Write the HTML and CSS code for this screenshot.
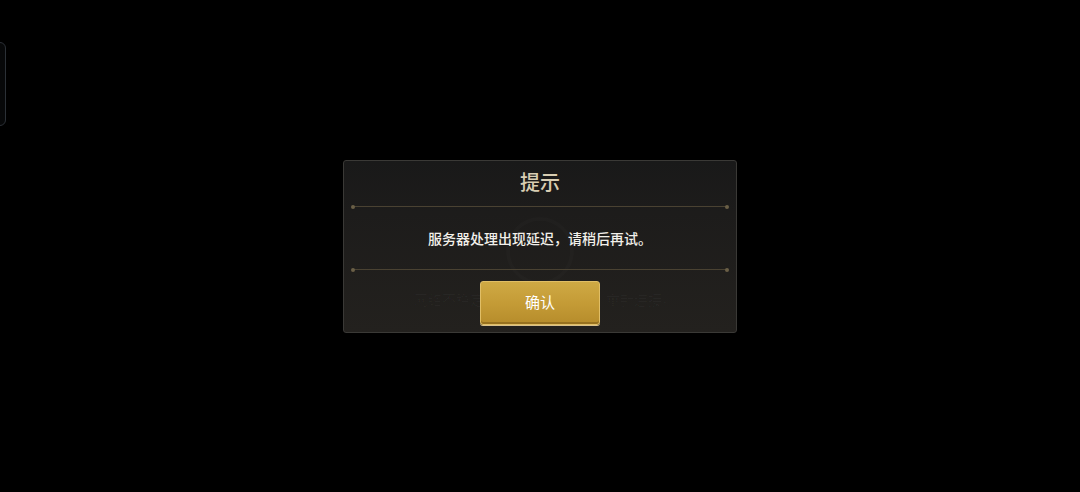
FILE: index.html
```html
<!DOCTYPE html>
<html lang="zh-CN">
<head>
  <meta charset="UTF-8" />
  <title>提示</title>
  <link rel="stylesheet" href="styles.css">
</head>
<body>
  <div class="edge-tab"></div>

  <div class="stage">
    <div class="dialog">
      <!-- faint loading layer behind the dialog content -->
      <div class="ghost">
        <div class="spinner"></div>
        <span class="ghost-text left">网络不稳定</span>
        <span class="ghost-text right">重新连接。</span>
      </div>
      <h2 class="title">提示</h2>
      <div class="divider"></div>
      <p class="message">服务器处理出现延迟，请稍后再试。</p>
      <div class="divider"></div>
      <div class="actions">
        <button class="confirm">确认</button>
      </div>
    </div>
  </div>
</body>
</html>
```

FILE: styles.css
```css
* {
  box-sizing: border-box;
}

body {
  margin: 0;
  width: 1080px;
  height: 492px;
  background: #000;
  font-family: "Noto Sans CJK SC", "Noto Sans", sans-serif;
  overflow: hidden;
  position: relative;
}

/* Left edge tab */
.edge-tab {
  position: absolute;
  left: -10px;
  top: 42px;
  width: 16px;
  height: 84px;
  border: 1px solid #2b3036;
  border-radius: 6px;
  background: #070809;
}

/* Stage */
.stage {
  display: flex;
  justify-content: center;
  padding-top: 160px;
}

/* Dialog */
.dialog {
  position: relative;
  width: 394px;
  height: 173px;
  border: 1px solid #3a3936;
  border-radius: 3px;
  background: linear-gradient(to bottom, #191919 0%, #1d1c1b 30%, #23211e 100%);
  padding: 0 7px;
  display: flex;
  flex-direction: column;
}

.ghost {
  position: absolute;
  inset: 0;
  pointer-events: none;
}
.spinner {
  position: absolute;
  left: 162px;
  top: 56px;
  width: 68px;
  height: 68px;
  border-radius: 50%;
  border: 4px solid rgba(255,255,255,0.015);
}
.ghost-text {
  position: absolute;
  top: 128px;
  font-size: 14px;
  color: rgba(255,255,255,0.03);
}
.ghost-text.left { left: 70px; }
.ghost-text.right { left: 262px; }

.title {
  position: relative;
  margin: 0;
  height: 45px;
  line-height: 42px;
  text-align: center;
  font-size: 20px;
  font-weight: 500;
  color: #d8cdb2;
}

.divider {
  position: relative;
  height: 1px;
  background: #4a4232;
  margin: 0 2px;
}
.divider::before,
.divider::after {
  content: "";
  position: absolute;
  top: -1.5px;
  width: 4px;
  height: 4px;
  border-radius: 50%;
  background: #6a5f46;
}
.divider::before { left: -2px; }
.divider::after { right: -2px; }

.message {
  position: relative;
  margin: 0;
  height: 62px;
  line-height: 62px;
  text-align: center;
  font-size: 14px;
  font-weight: 500;
  color: #f2f0ea;
}

.actions {
  position: relative;
  display: flex;
  justify-content: center;
  padding-top: 11px;
}

.confirm {
  width: 120px;
  height: 44px;
  padding: 0 0 3px;
  border: 1px solid #e0be66;
  border-radius: 3px;
  background: linear-gradient(to bottom, #cfa944 0%, #c39a35 55%, #b68c2b 100%);
  box-shadow: inset 0 -2px 0 rgba(120,85,20,0.5), 0 1px 0 #d9c08a;
  color: #fff;
  font-family: "Noto Sans CJK SC", sans-serif;
  font-size: 15px;
  cursor: pointer;
}
```
